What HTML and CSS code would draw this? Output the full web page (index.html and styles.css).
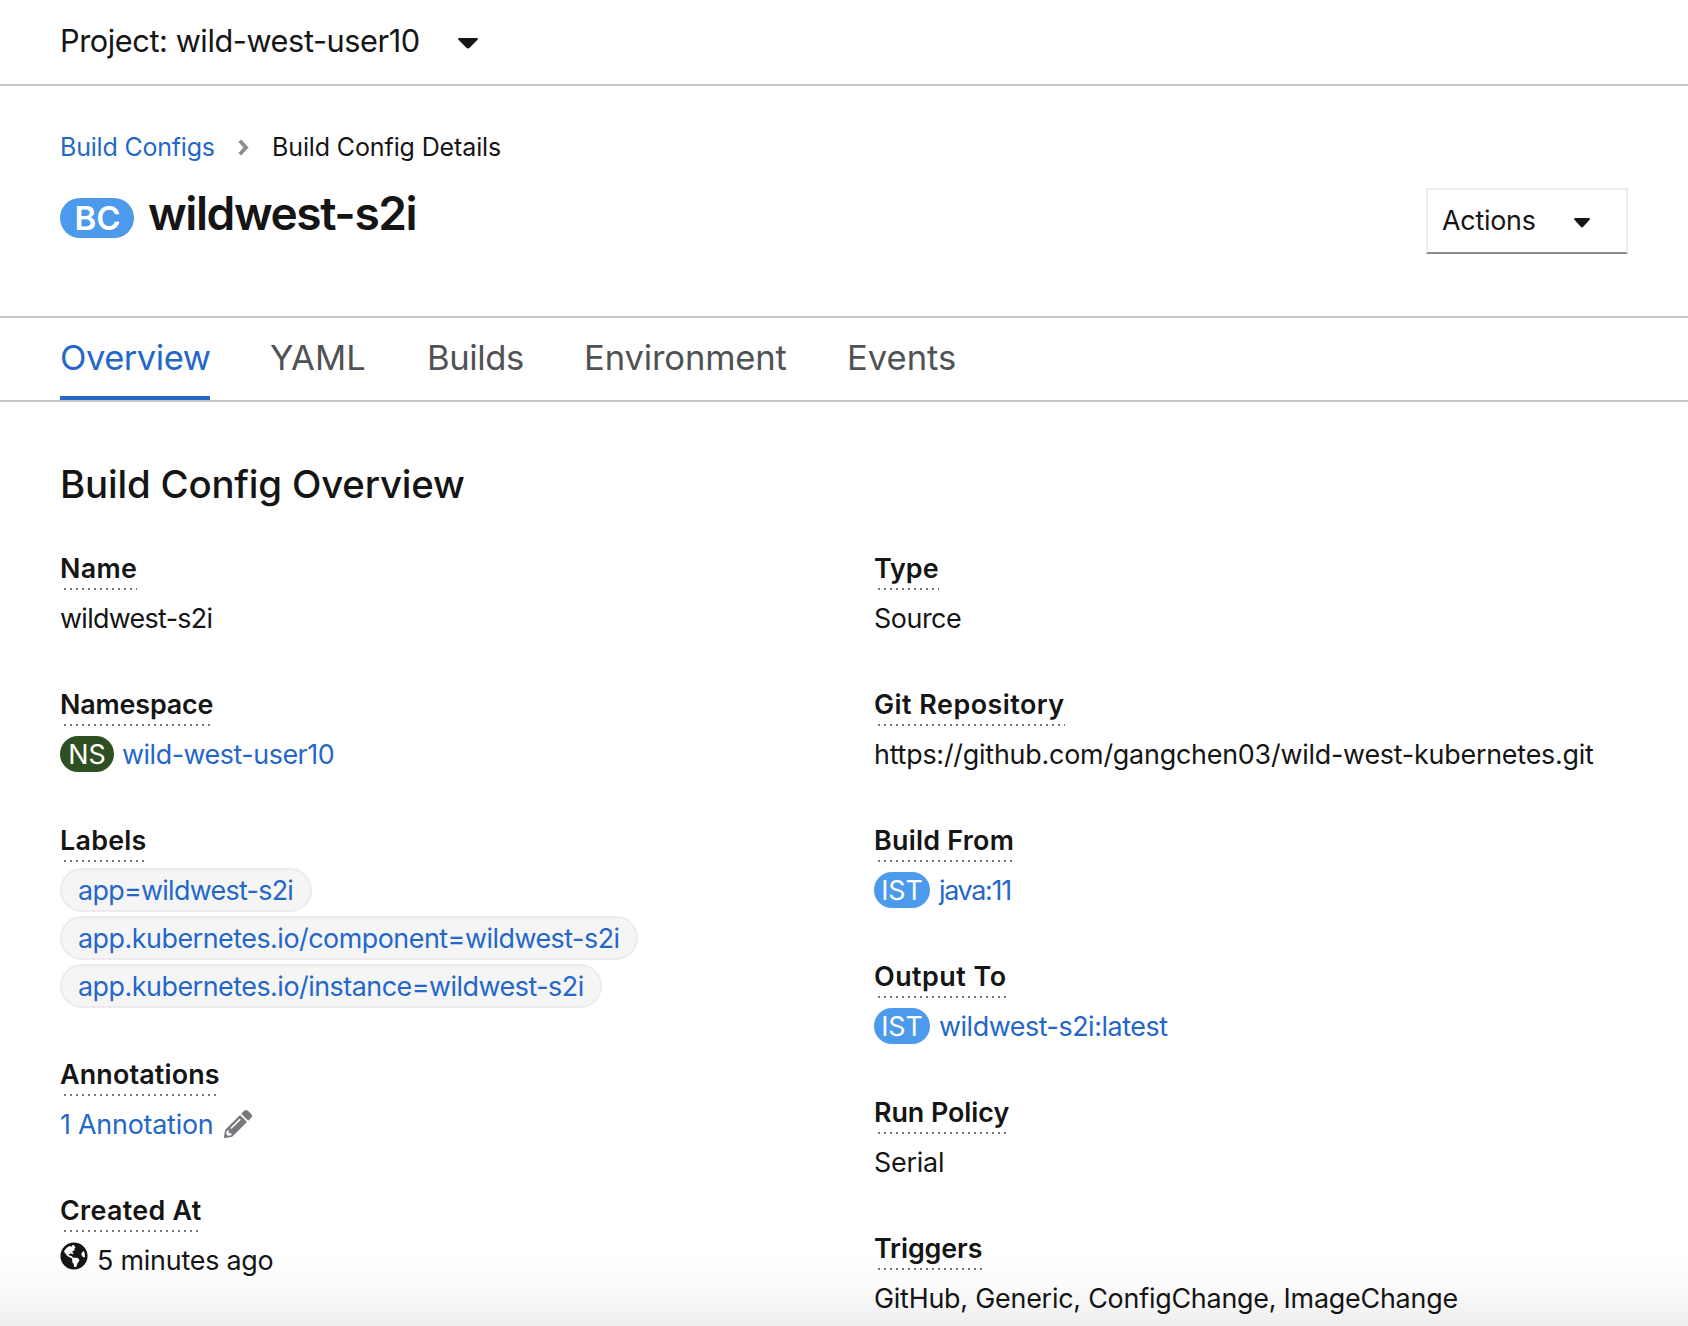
FILE: index.html
```html
<!DOCTYPE html>
<html lang="en">
<head>
<meta charset="utf-8">
<title>wildwest-s2i · Build Config Details</title>
<link rel="stylesheet" href="styles.css">
</head>
<body>
<div class="page">
  <div class="project-bar">
    <span class="project-name">Project: wild-west-user10</span>
    <svg class="project-caret" width="20" height="11" viewBox="0 0 20 11"><path d="M1.2 0h17.6c1 0 1.4 1.1.7 1.8l-7.9 7.9c-.9.9-2.3.9-3.2 0L.5 1.8C-.2 1.1.2 0 1.2 0z"/></svg>
  </div>

  <header class="page-header">
    <nav class="breadcrumb">
      <a class="crumb-link" href="#">Build Configs</a>
      <svg class="chevron" width="11" height="17" viewBox="0 0 11 17"><path d="M1.8 1.8l6.2 6.7-6.2 6.7" fill="none" stroke="#8a8d90" stroke-width="3.8"/></svg>
      <span class="crumb-current">Build Config Details</span>
    </nav>
    <div class="title-row">
      <span class="badge badge-bc">BC</span>
      <h1 class="title">wildwest-s2i</h1>
      <button class="actions" type="button">
        <span class="actions-text">Actions</span>
        <svg class="actions-caret" width="16" height="10" viewBox="0 0 20 11" preserveAspectRatio="none"><path d="M1.2 0h17.6c1 0 1.4 1.1.7 1.8l-7.9 7.9c-.9.9-2.3.9-3.2 0L.5 1.8C-.2 1.1.2 0 1.2 0z"/></svg>
      </button>
    </div>
  </header>

  <nav class="tabs">
    <a class="tab tab-overview active" href="#">Overview</a>
    <a class="tab tab-yaml" href="#">YAML</a>
    <a class="tab tab-builds" href="#">Builds</a>
    <a class="tab tab-env" href="#">Environment</a>
    <a class="tab" href="#">Events</a>
  </nav>

  <main class="content">
    <h2 class="section-title">Build Config Overview</h2>
    <div class="columns">
      <dl class="fields">
        <div class="field">
          <dt class="ls-name">Name</dt>
          <dd class="ls-wild">wildwest-s2i</dd>
        </div>
        <div class="field">
          <dt class="ls-namespace">Namespace</dt>
          <dd><span class="badge badge-ns">NS</span><a class="ns-link" href="#">wild-west-user10</a></dd>
        </div>
        <div class="field field-labels">
          <dt class="ls-labels">Labels</dt>
          <dd class="chips">
            <a class="chip chip-app" href="#">app=wildwest-s2i</a>
            <a class="chip" href="#">app.kubernetes.io/component=wildwest-s2i</a>
            <a class="chip" href="#">app.kubernetes.io/instance=wildwest-s2i</a>
          </dd>
        </div>
        <div class="field">
          <dt class="ls-annotations">Annotations</dt>
          <dd><a class="annotation-link" href="#">1 Annotation</a><svg class="pencil" width="28" height="28" viewBox="0 0 512 512"><path d="M497.9 142.1l-46.1 46.1c-4.7 4.7-12.3 4.7-17 0l-111-111c-4.7-4.7-4.7-12.3 0-17l46.1-46.1c18.7-18.7 49.1-18.7 67.9 0l60.1 60.1c18.8 18.7 18.8 49.1 0 67.9zM284.2 99.8L21.6 362.4.4 483.9c-2.9 16.4 11.4 30.6 27.8 27.8l121.5-21.3 262.6-262.6c4.7-4.7 4.7-12.3 0-17l-111-111c-4.8-4.7-12.4-4.7-17.1 0zM124.1 339.9c-5.5-5.5-5.5-14.3 0-19.8l154-154c5.5-5.5 14.3-5.5 19.8 0s5.5 14.3 0 19.8l-154 154c-5.5 5.5-14.3 5.5-19.8 0zM88 424h48v36.3l-64.5 11.3-31.1-31.1L51.7 376H88v48z"/></svg></dd>
        </div>
        <div class="field">
          <dt class="ls-created">Created At</dt>
          <dd><svg class="globe" width="28" height="28" viewBox="0 0 496 512"><path d="M248 8C111.03 8 0 119.03 0 256s111.03 248 248 248 248-111.03 248-248S384.97 8 248 8zm82.29 357.6c-3.9 3.88-7.99 7.95-11.31 11.28-2.99 3-5.1 6.7-6.17 10.71-1.51 5.66-2.73 11.38-4.77 16.87l-17.39 46.85c-13.76 3-28 4.69-42.65 4.69v-27.38c1.69-12.62-7.64-36.26-22.63-51.25-6-6-9.37-14.14-9.37-22.63v-32.01c0-11.64-6.27-22.34-16.46-27.97-14.37-7.95-34.81-19.06-48.81-26.11-11.48-5.78-22.1-13.14-31.65-21.75l-.8-.72a114.792 114.792 0 0 1-18.06-20.74c-9.38-13.77-24.66-36.42-34.59-51.14 20.47-45.5 57.36-82.04 103.2-101.89l24.01 12.01C203.48 89.74 216 82.01 216 70.11v-11.3c7.99-1.29 16.12-2.11 24.39-2.42l28.3 28.3c6.25 6.25 6.25 16.38 0 22.63L264 112l-10.34 10.34c-3.12 3.12-3.12 8.19 0 11.31l4.69 4.69c3.12 3.12 3.12 8.19 0 11.31l-8 8a8.008 8.008 0 0 1-5.66 2.34h-8.99c-2.08 0-4.08.81-5.58 2.27l-9.92 9.65a8.008 8.008 0 0 0-1.58 9.31l15.59 31.19c2.66 5.32-1.21 11.58-7.15 11.58h-5.64c-1.93 0-3.79-.7-5.24-1.96l-9.28-8.06a16.017 16.017 0 0 0-15.55-3.1l-31.17 10.39a11.95 11.95 0 0 0-8.17 11.34c0 4.53 2.56 8.66 6.61 10.69l11.08 5.54c9.41 4.71 19.79 7.16 30.31 7.16s22.59 27.29 32 32h66.75c8.49 0 16.62 3.37 22.63 9.37l13.69 13.69a30.503 30.503 0 0 1 8.93 21.57 46.536 46.536 0 0 1-13.72 32.98zM417 274.25c-5.79-1.45-10.84-5-14.15-9.97l-17.98-26.97a23.97 23.97 0 0 1 0-26.62l19.59-29.38c2.32-3.47 5.5-6.29 9.24-8.15l12.98-6.49C440.2 193.59 448 223.87 448 256c0 8.67-.74 17.16-1.82 25.54L417 274.25z"/></svg><span>5 minutes ago</span></dd>
        </div>
      </dl>

      <dl class="fields">
        <div class="field">
          <dt class="ls-type">Type</dt>
          <dd class="ls-source">Source</dd>
        </div>
        <div class="field">
          <dt class="ls-git">Git Repository</dt>
          <dd>https://github.com/gangchen03/wild-west-kubernetes.git</dd>
        </div>
        <div class="field">
          <dt class="ls-from">Build From</dt>
          <dd><span class="badge badge-ist">IST</span><a class="java-link" href="#">java:11</a></dd>
        </div>
        <div class="field">
          <dt class="ls-output">Output To</dt>
          <dd><span class="badge badge-ist">IST</span><a class="latest-link" href="#">wildwest-s2i:latest</a></dd>
        </div>
        <div class="field">
          <dt class="ls-policy">Run Policy</dt>
          <dd>Serial</dd>
        </div>
        <div class="field">
          <dt class="ls-triggers">Triggers</dt>
          <dd>GitHub, Generic, ConfigChange, ImageChange</dd>
        </div>
      </dl>
    </div>
  </main>
  <div class="scroll-shadow"></div>
</div>
</body>
</html>
```
FILE: styles.css
```css
* { box-sizing: border-box; }

body {
  margin: 0;
  background: #fff;
  color: #151515;
  font-family: Inter, "Liberation Sans", sans-serif;
  font-size: 26.88px;
  letter-spacing: -0.22px;
}

a { color: #2467c9; text-decoration: none; }
h1, h2, dl, dt, dd { margin: 0; }
svg { display: block; flex: none; }

.page {
  position: relative;
  height: 1326px;
  overflow: hidden;
}

/* project selector */
.project-bar {
  display: flex;
  align-items: center;
  height: 86px;
  padding: 0 60px 3px;
  border-bottom: 2px solid #c9c9c9;
  font-size: 30.72px;
  letter-spacing: -0.43px;
}
.project-caret { margin: 5px 0 0 38px; fill: #151515; }

/* header */
.page-header {
  height: 232px;
  padding: 41px 60px 0;
  border-bottom: 2px solid #c9c9c9;
}
.breadcrumb {
  display: flex;
  align-items: center;
  height: 40px;
  font-size: 24.96px;
  letter-spacing: -0.1px;
}
.crumb-link { width: 178px; letter-spacing: -0.18px; }
.chevron { margin-right: 23px; }
.title-row {
  display: flex;
  align-items: flex-start;
  margin-top: 18px;
}
.title {
  font-size: 46.08px;
  font-weight: 600;
  line-height: 56px;
  letter-spacing: -1.4px;
}
.badge {
  flex: none;
  display: flex;
  align-items: center;
  justify-content: center;
  color: #fff;
  border-radius: 20px;
  background: #4c9aeb;
}
.badge-bc {
  width: 74px;
  height: 40px;
  margin: 13px 14px 0 0;
  padding-left: 1px;
  font-size: 33px;
  font-weight: 600;
  letter-spacing: 0;
}
.actions {
  display: flex;
  width: 202px;
  height: 66px;
  margin: 3px 0 0 auto;
  padding: 0 0 3px 14px;
  align-items: center;
  border: 2px solid #ededed;
  border-bottom-color: #8a8d90;
  background: #fff;
  color: inherit;
  font: inherit;
  letter-spacing: -0.25px;
}
.actions-caret { margin: 6px 0 0 38px; fill: #151515; }

/* tabs */
.tabs {
  display: flex;
  gap: 60px;
  height: 84px;
  padding: 0 60px;
  border-bottom: 2px solid #c9c9c9;
}
.tab {
  height: 82px;
  border-bottom: 4px solid transparent;
  color: #4f5255;
  font-size: 34.56px;
  line-height: 79px;
  letter-spacing: 0;
}
.tab-overview { letter-spacing: -0.5px; width: 150px; }
.tab-yaml { letter-spacing: 0.1px; width: 97px; }
.tab-builds { letter-spacing: -0.4px; width: 97px; }
.tab-env { letter-spacing: -0.12px; width: 203px; }
.tab.active { color: #2467c9; border-bottom-color: #2467c9; }

/* overview */
.content { padding: 54px 60px 0; }
.section-title {
  font-size: 38.4px;
  font-weight: 500;
  line-height: 56px;
  letter-spacing: -0.19px;
}
.columns {
  display: grid;
  grid-template-columns: 1fr 1fr;
  gap: 60px;
  margin-top: 36px;
}
.fields {
  display: flex;
  flex-direction: column;
  gap: 44px;
}
.field-labels { margin-bottom: 2px; }
dt {
  width: fit-content;
  height: 42px;
  line-height: 40px;
  font-weight: 600;
  background: repeating-linear-gradient(90deg, transparent 0 4px, #777 4px 6px) 0 100% / 100% 2px no-repeat;
}
dd {
  display: flex;
  align-items: center;
  min-height: 44px;
  margin-top: 6px;
  line-height: 44px;
  white-space: nowrap;
}
dd .badge { height: 36px; line-height: 36px; }
.badge-ns { width: 54px; margin-right: 8px; background: #2d4f21; letter-spacing: 0; }
.badge-ist { width: 56px; margin-right: 9px; letter-spacing: -0.08px; }
.ns-link { letter-spacing: -0.46px; }
.java-link { letter-spacing: -1.3px; }
.latest-link { letter-spacing: -0.45px; }
.annotation-link { width: 154px; letter-spacing: -0.23px; }
.pencil { margin: 0 0 0 10px; fill: #77797c; }
.globe { margin: -8px 9px 0 0; fill: #151515; }

.chips {
  flex-direction: column;
  align-items: flex-start;
  gap: 4px;
}
.chip {
  height: 44px;
  padding: 0 16px;
  border: 2px solid #ececec;
  border-radius: 22px;
  background: #f5f5f5;
  line-height: 40px;
  letter-spacing: -0.49px;
}
.chip-app { width: 252px; letter-spacing: -0.7px; }

.ls-name { letter-spacing: 0.3px; }
.ls-wild { letter-spacing: -0.68px; }
.ls-namespace { letter-spacing: -0.15px; }
.ls-labels { letter-spacing: 0.25px; }
.ls-annotations { letter-spacing: 0.16px; }
.ls-created { letter-spacing: 0.3px; }
.ls-type { letter-spacing: 0; }
.ls-source { letter-spacing: -0.45px; }
.ls-git { letter-spacing: 0.48px; }
.ls-from { letter-spacing: 0.26px; }
.ls-output { letter-spacing: 0.5px; }
.ls-policy { letter-spacing: -0.06px; }
.ls-triggers { letter-spacing: -0.1px; }

/* fade over the bottom of the scrolled pane */
.scroll-shadow {
  position: absolute;
  inset: auto 0 0;
  height: 80px;
  background: linear-gradient(rgba(0, 0, 0, 0), rgba(0, 0, 0, 0.015) 50%, rgba(0, 0, 0, 0.065));
}
```
